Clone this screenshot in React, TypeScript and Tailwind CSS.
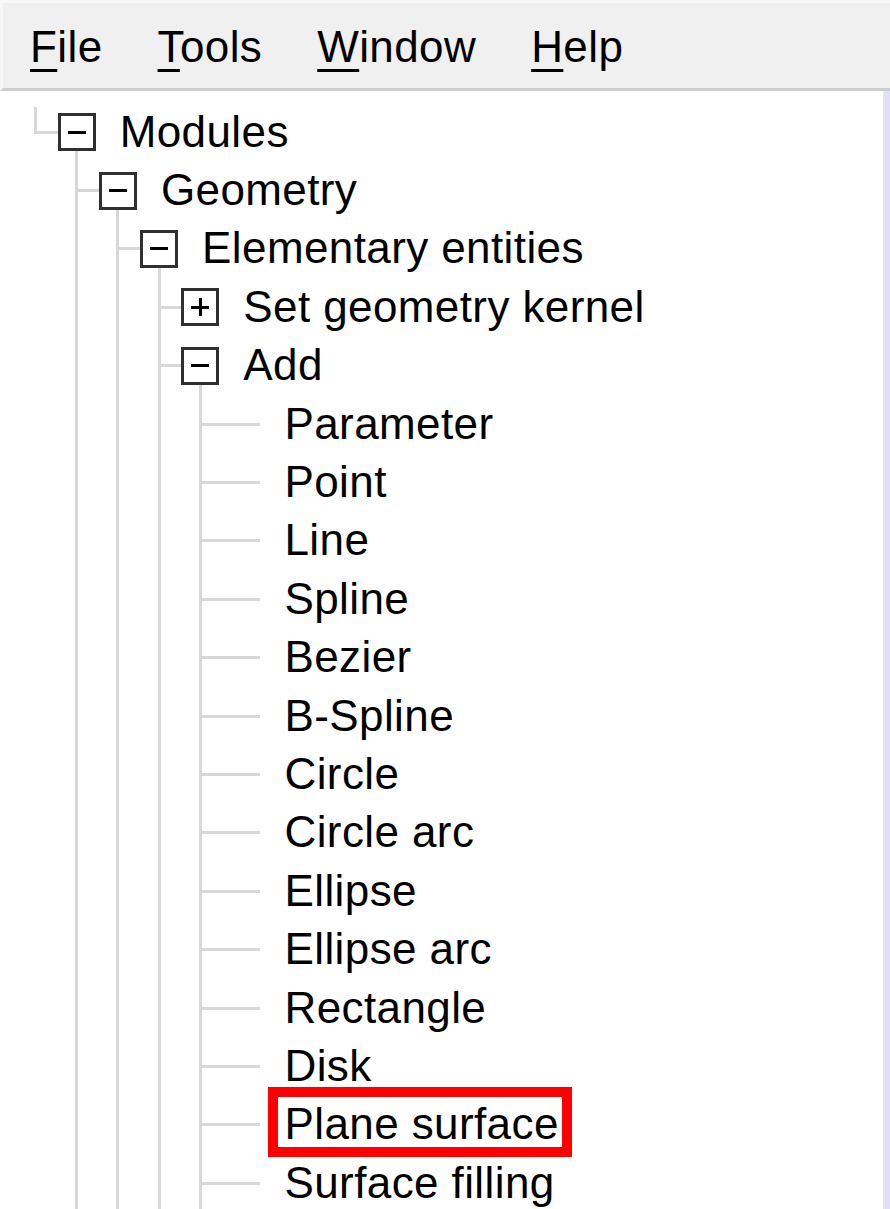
import React from 'react';

const ROW = 58.4;
const col = (k: number) => 35.5 + 41.2 * k;

type Item = { label: string; depth: number; box?: 'plus' | 'minus'; mark?: boolean };

const leaves = [
  'Parameter',
  'Point',
  'Line',
  'Spline',
  'Bezier',
  'B-Spline',
  'Circle',
  'Circle arc',
  'Ellipse',
  'Ellipse arc',
  'Rectangle',
  'Disk',
  'Plane surface',
  'Surface filling',
];

const items: Item[] = [
  { label: 'Modules', depth: 0, box: 'minus' },
  { label: 'Geometry', depth: 1, box: 'minus' },
  { label: 'Elementary entities', depth: 2, box: 'minus' },
  { label: 'Set geometry kernel', depth: 3, box: 'plus' },
  { label: 'Add', depth: 3, box: 'minus' },
  ...leaves.map((l) => ({ label: l, depth: 4, mark: l === 'Plane surface' })),
];

const menus = ['File', 'Tools', 'Window', 'Help'];

const TreeRow = ({ item }: { item: Item }) => {
  const { depth, box } = item;
  const mid = ROW / 2;
  const boxLeft = col(depth + 1) - 19;
  const lineEnd = box ? boxLeft : col(depth + 1) + 19;

  return (
    <div className="relative flex items-center h-[58.4px]">
      {/* guide lines of ancestors */}
      {Array.from({ length: depth }, (_, i) => (
        <div
          key={i}
          className="absolute top-0 bottom-0 w-[3px] bg-[#d8d8d8]"
          style={{ left: col(i + 1) - 1.5 }}
        />
      ))}
      {depth === 0 && (
        <div
          className="absolute w-[3px] bg-[#d8d8d8]"
          style={{ left: col(0) - 1.5, top: 4, height: mid - 4 + 1.5 }}
        />
      )}
      {/* connector to node */}
      <div
        className="absolute h-[3px] bg-[#d8d8d8]"
        style={{ left: col(depth) - 1.5, width: lineEnd - col(depth) + 1.5, top: mid - 1.5 }}
      />
      {box === 'minus' && (
        <div
          className="absolute bottom-0 w-[3px] bg-[#d8d8d8]"
          style={{ left: col(depth + 1) - 1.5, top: mid + 19 }}
        />
      )}
      {box && (
        <div
          className="absolute w-[38px] h-[38px] border-[3px] border-[#303030] bg-white flex items-center justify-center"
          style={{ left: boxLeft, top: mid - 19 }}
        >
          <div className="relative w-[18px] h-[3px] bg-black">
            {box === 'plus' && (
              <div className="absolute left-[7.5px] -top-[7.5px] w-[3px] h-[18px] bg-black" />
            )}
          </div>
        </div>
      )}
      <div className="shrink-0" style={{ width: col(depth + 1) + 43 }} />
      <span className="leading-[49px] pb-[2px] whitespace-nowrap text-black tracking-[0.4px]">{item.label}</span>
      {item.mark && (
        <div className="absolute left-[268px] -top-[9px] w-[304px] h-[70px] border-[10px] border-[#ff0000]" />
      )}
    </div>
  );
};

export default function App() {
  return (
    <div className="w-[890px] h-[1209px] overflow-hidden bg-white flex flex-col font-['Liberation_Sans',Arial,sans-serif] text-[44px]">
      {/* Menu bar */}
      <div className="h-[91px] shrink-0 bg-[#f0f0f0] border-t-[3px] border-l-[3px] border-[#f8f8f8] border-b-[3px] border-b-[#cdcdcd] flex items-start gap-[55px] pl-[27px] pt-[19px]">
        {menus.map((m) => (
          <span key={m} className="leading-[49px] text-black whitespace-nowrap tracking-[0.4px]">
            <span className="underline decoration-[3px] underline-offset-[7px]">{m[0]}</span>
            {m.slice(1)}
          </span>
        ))}
      </div>

      {/* Tree */}
      <div className="flex flex-1 min-h-0">
        <div className="flex-1 pt-[12px] overflow-hidden">
          {items.map((it) => (
            <TreeRow key={it.label} item={it} />
          ))}
        </div>
        <div className="w-[3px] bg-[#e4e4e4]" />
        <div className="w-[4px] bg-[#dde0fa]" />
      </div>
    </div>
  );
}
